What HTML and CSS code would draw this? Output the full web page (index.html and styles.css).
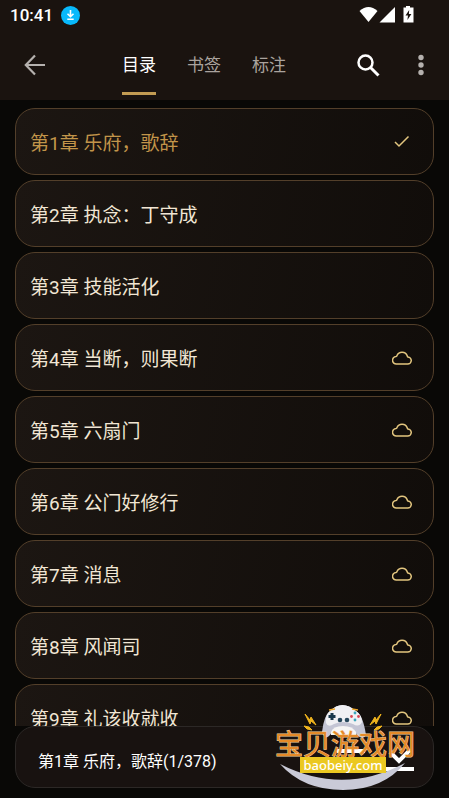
FILE: index.html
```html
<!DOCTYPE html>
<html lang="zh-CN">
<head>
    <meta charset="UTF-8">
    <meta name="viewport" content="width=device-width, initial-scale=1.0">
    <title>目录</title>
    <link rel="stylesheet" href="styles.css">
</head>
<body>
    <header class="header">
        <div class="status-bar">
            <span class="time">10:41</span>
            <svg class="download" width="19" height="19" viewBox="0 0 19 19">
                <circle cx="9.5" cy="9.5" r="9.5" fill="#08b9fb"/>
                <path d="M9.5 4v6M6.5 7.7l3 3 3-3M6.3 13.3h6.4" fill="none" stroke="#fff" stroke-width="1.6"/>
            </svg>
            <svg class="signals" width="56" height="18" viewBox="0 0 56 18">
                <path d="M0.5 5Q9.5-3 18.5 5L9.5 16Z" fill="#fff"/>
                <path d="M36 1v15.5H20.5Z" fill="#fff"/>
                <path d="M47 0h4v1.5h3.5v15h-10v-15H47Z" fill="#fff"/>
                <path d="M50.2 4l-3.7 5.5H49l-.6 4.5 4-6h-2.5Z" fill="#1a130f"/>
            </svg>
        </div>
        <div class="toolbar">
            <button class="icon-btn" aria-label="返回">
                <svg width="22" height="22" viewBox="0 0 22 22">
                    <path d="M21 11H2M11 1.5L1.8 11l9.2 9.5" fill="none" stroke="#b5b1ae" stroke-width="2.2"/>
                </svg>
            </button>
            <nav class="tabs">
                <button class="tab active">目录</button>
                <button class="tab">书签</button>
                <button class="tab">标注</button>
            </nav>
            <div class="actions">
                <button class="icon-btn" aria-label="搜索">
                    <svg width="24" height="24" viewBox="0 0 24 24">
                        <circle cx="9.5" cy="9.5" r="7" fill="none" stroke="#fff" stroke-width="2.5"/>
                        <path d="M14.5 14.5l8 8" stroke="#fff" stroke-width="3"/>
                    </svg>
                </button>
                <button class="icon-btn" aria-label="更多">
                    <svg width="6" height="22" viewBox="0 0 6 22" fill="#b5b1ae">
                        <circle cx="3" cy="3.5" r="2.7"/>
                        <circle cx="3" cy="11" r="2.7"/>
                        <circle cx="3" cy="18.5" r="2.7"/>
                    </svg>
                </button>
            </div>
        </div>
    </header>

    <main class="chapters" id="chapters"></main>

    <footer class="footer">
        <div class="panel">
            <span>第1章 乐府，歌辞(1/378)</span>
            <button class="icon-btn locate" aria-label="排序">
                <svg width="28" height="24" viewBox="0 0 28 24">
                    <path d="M0 3h28M4 12h20M9 21h10" stroke="#fff" stroke-width="4"/>
                </svg>
            </button>
            <button class="icon-btn" aria-label="下载全部">
                <svg width="30" height="24" viewBox="0 0 30 24">
                    <path d="M6 4l9 9L26 2" fill="none" stroke="#fff" stroke-width="4"/>
                    <path d="M0 21h30" stroke="#fff" stroke-width="4"/>
                </svg>
            </button>
        </div>
    </footer>

    <svg class="badge" width="144" height="92" viewBox="0 0 144 92">
        <!-- gamepad -->
        <path d="M51 30Q53 13 59 9Q71-3 85 9Q92 13 95 33Q92 39 86 33L82 27H63L59 33Q54 39 51 30Z" fill="#c4c5d4"/>
        <path d="M55 21Q54 13 59 9Q71-3 85 9Q91 13 91 20Q88 26 82 22Q72 18 63 22Q57 26 55 21Z" fill="#f0f0f3"/>
        <path d="M60 30Q62 24 72 24T85 30V33H60Z" fill="#f6f5f4"/>
        <path d="M61 11v7M57.5 14.5h7" stroke="#18374a" stroke-width="3"/>
        <circle cx="84" cy="11" r="1.4" fill="#3ba6bb"/>
        <circle cx="84" cy="18" r="1.4" fill="#3ba6bb"/>
        <circle cx="80.5" cy="14.5" r="1.4" fill="#d94853"/>
        <circle cx="87.5" cy="14.5" r="1.4" fill="#d94853"/>
        <circle cx="69" cy="18" r="2.3" fill="#25465a"/>
        <circle cx="76" cy="18" r="2.3" fill="#25465a"/>
        <path d="M58 8l6-1M81 7l6 1" stroke="#eaa62c" stroke-width="1.5"/>
        <path d="M34 12l5 6 1-3 5 8-5-4-1 3ZM110 12l-5 6-1-3-5 8 5-4 1 3ZM33 24l5 1 3 3-5-1ZM111 24l-5 1-3 3 5-1Z" fill="#f1b51e" stroke="#f1b51e"/>
        <path d="M9 62Q72 94 134 61Q112 88 72 88T9 62Z" fill="#c9cad7"/>
        <text class="badge-name" x="4" y="53">宝贝游戏网</text>
        <rect x="29" y="55" width="86" height="16" fill="#ebc821"/>
        <text class="badge-url" x="72" y="68">baobeiy.com</text>
    </svg>

    <script>
        const chapters = [
            { title: "第1章 乐府，歌辞", state: "current" },
            { title: "第2章 执念：丁守成", state: "" },
            { title: "第3章 技能活化", state: "" },
            { title: "第4章 当断，则果断", state: "cloud" },
            { title: "第5章 六扇门", state: "cloud" },
            { title: "第6章 公门好修行", state: "cloud" },
            { title: "第7章 消息", state: "cloud" },
            { title: "第8章 风闻司", state: "cloud" },
            { title: "第9章 礼该收就收", state: "cloud" },
        ];

        const icons = {
            current: '<svg width="20" height="20" viewBox="0 0 20 20"><path d="M3 10l4 4L16.500 4.500" fill="none" stroke="#e3c67f" stroke-width="1.5"/></svg>',
            cloud: '<svg width="20" height="20" viewBox="0 0 20 20"><path d="M4.5 16H15.5A3.500 3.500 0 0 0 16 9C15.5 9 15.4 8.500 15.2 7.800A5.500 5.500 0 0 0 5 7.500C4.8 8.300 4.5 8.500 4 8.600A3.700 3.700 0 0 0 4.5 16Z" fill="none" stroke="#e3c67f" stroke-width="1.5"/></svg>',
        };

        const list = document.getElementById('chapters');

        chapters.forEach(chapter => {
            const row = document.createElement('button');
            row.className = 'chapter ' + chapter.state;
            row.innerHTML = `<span>${chapter.title}</span>${icons[chapter.state] || ''}`;
            list.appendChild(row);
        });
    </script>
</body>
</html>
```

FILE: styles.css
```css
* {
    box-sizing: border-box;
}
body {
    font-family: Roboto, "Noto Sans CJK SC", sans-serif;
    background-color: #090806;
    color: #fff;
    margin: 0;
    height: 100vh;
    display: flex;
    flex-direction: column;
}
button {
    font: inherit;
    color: inherit;
    background: none;
    border: 0;
    padding: 0;
    cursor: pointer;
}
svg {
    display: block;
    flex: none;
}
.header {
    background-color: #1a130f;
}
.status-bar {
    display: flex;
    align-items: center;
    height: 30px;
    padding: 0 34px 0 10px;
}
.time {
    font-size: 17px;
    font-weight: 500;
}
.download {
    margin-left: 8px;
}
.signals {
    margin-left: auto;
}
.toolbar {
    display: flex;
    height: 70px;
    padding: 0 4px 0 11px;
}
.icon-btn {
    display: flex;
    align-items: center;
    justify-content: center;
    width: 48px;
}
.tabs {
    display: flex;
    gap: 31px;
    margin-left: 63px;
}
.tab {
    font-size: 17px;
    color: #aaa39e;
    margin-bottom: 5px;
    padding-top: 5px;
    border-bottom: 3px solid transparent;
}
.tab.active {
    color: #fff;
    border-bottom-color: #c29b52;
}
.actions {
    display: flex;
    gap: 5px;
    margin-left: auto;
}
.chapters {
    flex: 1;
    min-height: 0;
    display: flex;
    flex-direction: column;
    gap: 5px;
    padding: 8px 15px 0;
    overflow-y: auto;
    scrollbar-width: none;
}
.chapter {
    display: flex;
    align-items: center;
    justify-content: space-between;
    flex: none;
    height: 67px;
    padding: 0 21px 0 14px;
    font-size: 19px;
    color: #f1e6d4;
    background: linear-gradient(100deg, #1c1612, #110d0a);
    border: 1px solid #533f2a;
    border-radius: 20px;
}
.chapter.current {
    color: #c2954a;
}
.footer {
    padding: 0 15px 10px;
}
.panel {
    display: flex;
    align-items: center;
    height: 62px;
    padding: 6px 10px 0 22px;
    background-color: #181210;
    border: 1px solid #2c2826;
    border-radius: 20px;
    font-size: 16px;
}
.locate {
    margin-left: auto;
}
.badge {
    position: absolute;
    right: 34px;
    bottom: 4px;
}
.badge-name {
    font-family: "Noto Sans CJK SC", sans-serif;
    font-size: 28px;
    fill: #e58a28;
    stroke: #f3cf9f;
    stroke-width: 1px;
    paint-order: stroke;
}
.badge-url {
    font-family: "Noto Sans", sans-serif;
    font-size: 13px;
    font-weight: 500;
    fill: #fff;
    text-anchor: middle;
}
```
